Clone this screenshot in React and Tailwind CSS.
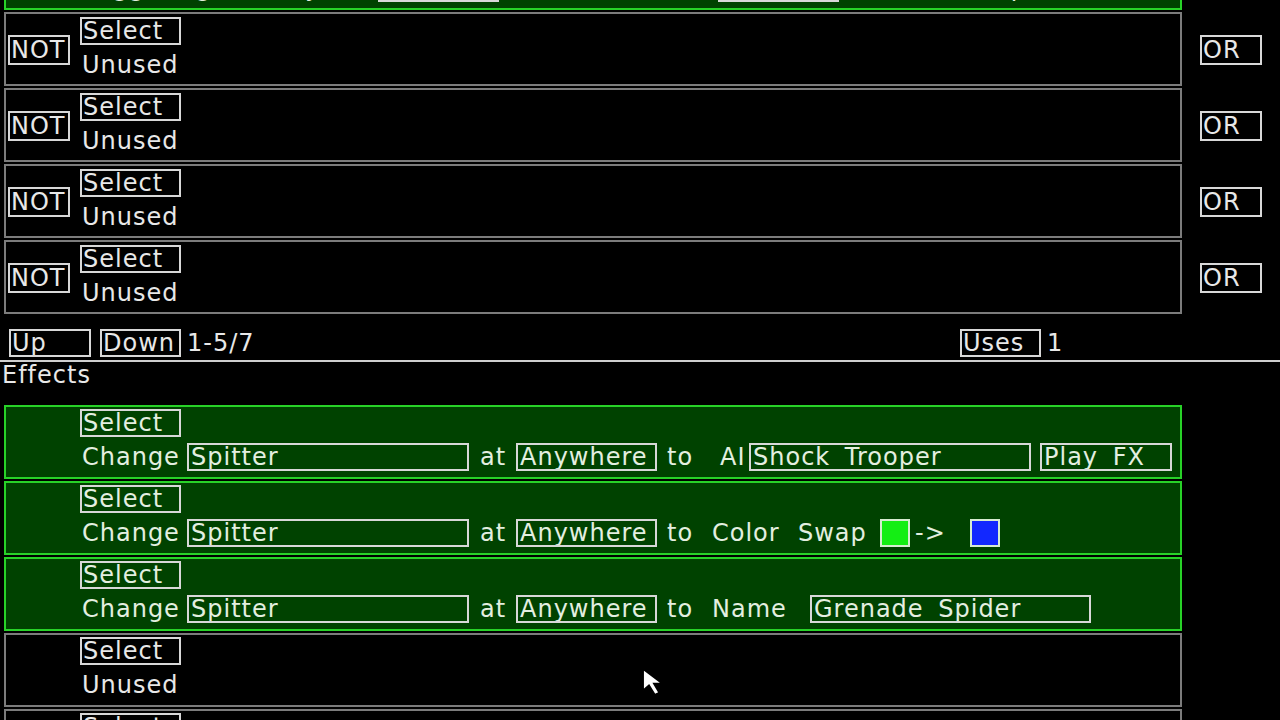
import clsx from 'clsx';

const FONT = "font-['DejaVu_Sans',sans-serif]";

function Btn({ w, children, className }) {
  return (
    <div
      className={clsx(
        'h-[28px] border-2 border-[#d8d8d8] pl-[1px] leading-[24px] whitespace-pre shrink-0 overflow-hidden',
        w,
        className
      )}
    >
      {children}
    </div>
  );
}

function Cell({ w, children, className }) {
  return <div className={clsx('h-[28px] leading-[28px] whitespace-pre shrink-0', w, className)}>{children}</div>;
}

function ConditionRow() {
  return (
    <div className="flex items-center">
      <div className="ml-[4px] w-[1178px] h-[74px] border-2 border-[#7c7c7c] flex items-center pl-[2px]">
        <Btn w="w-[62px]" className="h-[30px] leading-[26px] mt-[2px]">NOT</Btn>
        <div className="ml-[10px] flex flex-col self-start pt-[3px]">
          <Btn w="w-[101px]">Select</Btn>
          <div className="pl-[2px] h-[28px] leading-[28px] mt-[6px]">Unused</div>
        </div>
      </div>
      <Btn w="w-[62px]" className="ml-[18px] h-[30px] leading-[26px] mt-[2px]">OR</Btn>
    </div>
  );
}

function EffectRow({ children, green = true, className }) {
  return (
    <div
      className={clsx(
        'ml-[4px] w-[1178px] h-[74px] border-2 pl-[74px] pt-[2px] flex flex-col shrink-0',
        green ? 'bg-[#004200] border-[#28d228] text-[#e4efe0]' : 'border-[#7c7c7c]',
        className
      )}
    >
      <Btn w="w-[101px]" className={green ? 'border-[#d6ecd0]' : ''}>Select</Btn>
      <div className="flex items-center mt-[6px] h-[28px]">{children}</div>
    </div>
  );
}

function Field({ w, children }) {
  return (
    <Btn w={w} className="border-[#d6ecd0] pl-[2px] [word-spacing:6px]">
      {children}
    </Btn>
  );
}

function ChangeLead() {
  return (
    <>
      <Cell w="w-[107px]" className="pl-[2px]">Change</Cell>
      <Field w="w-[282px]">Spitter</Field>
      <Cell w="w-[47px]" className="pl-[11px]">at</Cell>
      <Field w="w-[141px]">Anywhere</Field>
    </>
  );
}

function Cursor() {
  return (
    <svg className="absolute left-[641px] top-[667px]" width="32" height="32" viewBox="0 0 30 30">
      <path d="M2 2 L2 22 L7.5 17 L13 26 L17 24 L12 15.5 L20 15.5 Z" fill="#fff" stroke="#000" strokeWidth="1.5" />
    </svg>
  );
}

export default function App() {
  return (
    <div className={clsx('relative w-[1280px] h-[720px] overflow-hidden bg-black text-[#e8e8e8] text-[24px] tracking-[1px]', FONT)}>
      {/* conditions list, scrolled so only the tail of the first row shows */}
      <div className="flex flex-col gap-[2px]">
        <EffectRow className="mt-[-64px]">
          <Cell w="w-[150px]" className="pl-[2px]">Triggering</Cell>
          <Cell w="w-[148px]">unit by</Cell>
          <Field w="w-[121px]">Anyone</Field>
          <Cell w="w-[219px]" className="pl-[10px]">within</Cell>
          <Field w="w-[121px]">Anywhere</Field>
          <Cell w="w-[200px]" className="pl-[110px]">Group</Cell>
        </EffectRow>
        <ConditionRow />
        <ConditionRow />
        <ConditionRow />
        <ConditionRow />
      </div>

      {/* paging */}
      <div className="flex items-center mt-[15px] pl-[9px]">
        <div className="w-[951px] flex items-center">
          <Btn w="w-[82px]">Up</Btn>
          <Btn w="w-[81px]" className="ml-[9px]">Down</Btn>
          <Cell className="ml-[6px]">1-5/7</Cell>
        </div>
        <Btn w="w-[81px]">Uses</Btn>
        <Cell className="ml-[6px]">1</Cell>
      </div>

      <div className="mt-[3px] h-[2px] bg-[#cfcfcf]" />
      <div className="pl-[2px] h-[26px] leading-[26px]">Effects</div>

      {/* effects list */}
      <div className="flex flex-col gap-[2px] mt-[17px]">
        <EffectRow>
          <ChangeLead />
          <Cell w="w-[63px]" className="pl-[10px]">to</Cell>
          <Cell w="w-[29px]">AI</Cell>
          <Field w="w-[282px]">Shock Trooper</Field>
          <div className="ml-[9px]">
            <Field w="w-[132px]">Play FX</Field>
          </div>
        </EffectRow>
        <EffectRow>
          <ChangeLead />
          <Cell w="w-[55px]" className="pl-[10px]">to</Cell>
          <Cell w="w-[86px]">Color</Cell>
          <Cell w="w-[82px]">Swap</Cell>
          <div className="w-[30px] h-[28px] border-2 border-[#d6ecd0] bg-[#14ee14] shrink-0" />
          <Cell w="w-[60px]" className="pl-[5px]">-&gt;</Cell>
          <div className="w-[30px] h-[28px] border-2 border-[#d6ecd0] bg-[#1228ff] shrink-0" />
        </EffectRow>
        <EffectRow>
          <ChangeLead />
          <Cell w="w-[55px]" className="pl-[10px]">to</Cell>
          <Cell w="w-[98px]">Name</Cell>
          <Field w="w-[281px]">Grenade Spider</Field>
        </EffectRow>
        <EffectRow green={false}>
          <Cell className="pl-[2px]">Unused</Cell>
        </EffectRow>
        <EffectRow green={false}>
          <Cell className="pl-[2px]">Unused</Cell>
        </EffectRow>
      </div>

      <Cursor />
    </div>
  );
}
